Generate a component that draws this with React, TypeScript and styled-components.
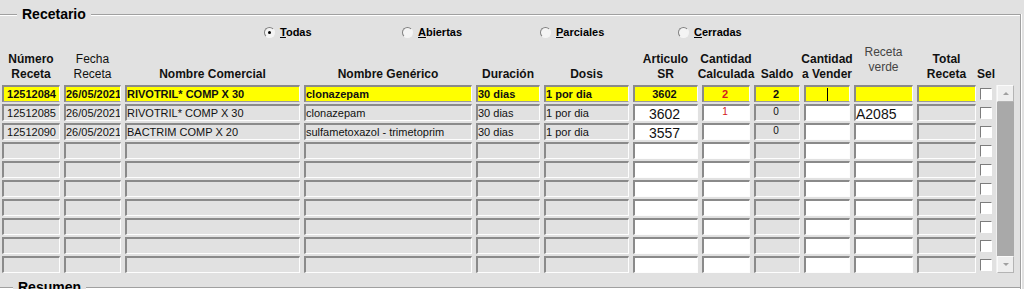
import styled, { createGlobalStyle, css } from 'styled-components';

const GlobalStyle = createGlobalStyle`
    html, body {
        margin: 0;
        padding: 0;
        background: #e1e1e1;
        overflow: hidden;
        height: 289px;
    }
    body {
        font-family: 'Liberation Sans', Arial, sans-serif;
        color: #000;
    }
`;

const COLS = [58, 57, 175, 168, 64, 85, 65, 48, 46, 46, 59, 59, 12, 18];

type Tone = 'gray' | 'white' | 'yellow';
type Align = 'left' | 'center' | 'right';

interface CellData {
    text?: string;
    align?: Align;
    big?: boolean;
    small?: boolean;
    red?: boolean;
    caret?: boolean;
}

interface Row {
    active?: boolean;
    cells: CellData[];
}

// which columns are editable (white background)
const WHITE_COLS = [6, 7, 9, 10];

const HEADERS: { lines: string[]; light?: boolean; raised?: boolean }[] = [
    { lines: ['Número', 'Receta'] },
    { lines: ['Fecha', 'Receta'], light: true },
    { lines: ['Nombre Comercial'] },
    { lines: ['Nombre Genérico'] },
    { lines: ['Duración'] },
    { lines: ['Dosis'] },
    { lines: ['Articulo', 'SR'] },
    { lines: ['Cantidad', 'Calculada'] },
    { lines: ['Saldo'] },
    { lines: ['Cantidad', 'a Vender'] },
    { lines: ['Receta', 'verde'], light: true, raised: true },
    { lines: ['Total', 'Receta'] },
    { lines: ['Sel'] },
];

const ROWS: Row[] = [
    {
        active: true,
        cells: [
            { text: '12512084', align: 'right' },
            { text: '26/05/2021' },
            { text: 'RIVOTRIL* COMP X 30' },
            { text: 'clonazepam' },
            { text: '30 dias' },
            { text: '1 por dia' },
            { text: '3602', align: 'center' },
            { text: '2', align: 'center', red: true },
            { text: '2', align: 'center' },
            { caret: true },
            {},
            {},
        ],
    },
    {
        cells: [
            { text: '12512085', align: 'right' },
            { text: '26/05/2021' },
            { text: 'RIVOTRIL* COMP X 30' },
            { text: 'clonazepam' },
            { text: '30 dias' },
            { text: '1 por dia' },
            { text: '3602', align: 'center', big: true },
            { text: '1', align: 'center', red: true, small: true },
            { text: '0', align: 'center', small: true },
            {},
            { text: 'A2085', big: true },
            {},
        ],
    },
    {
        cells: [
            { text: '12512090', align: 'right' },
            { text: '26/05/2021' },
            { text: 'BACTRIM COMP X 20' },
            { text: 'sulfametoxazol - trimetoprim' },
            { text: '30 dias' },
            { text: '1 por dia' },
            { text: '3557', align: 'center', big: true },
            {},
            { text: '0', align: 'center', small: true },
            {},
            {},
            {},
        ],
    },
];

while (ROWS.length < 10) ROWS.push({ cells: Array.from({ length: 12 }, () => ({})) });

const Frame = styled.fieldset`
    margin: 6px 3px 0 -6px;
    padding: 2px 0 0 7px;
    border: 1px solid #a0a0a0;
    border-bottom: none;
    box-shadow: inset 1px 1px 0 #fff, 1px 0 0 #fff;
    min-width: 0;
    height: 320px;
`;

const Legend = styled.legend`
    margin-left: 15px;
    padding: 0 5px;
    font-size: 14px;
    font-weight: bold;
    line-height: 16px;
    background: #e1e1e1;
`;

const SubFrame = styled.fieldset`
    margin: 6px 0 0 -4px;
    padding: 0;
    border: none;
    border-top: 1px solid #a0a0a0;
    box-shadow: inset 0 1px 0 #fff;
    height: 30px;
`;

const RadioRow = styled.div`
    display: flex;
    padding-left: 262px;
    height: 16px;
    align-items: center;
`;

const RadioItem = styled.label`
    width: 138px;
    display: flex;
    align-items: center;
    gap: 5px;
    font-size: 11px;
    font-weight: bold;
`;

const RadioDot = styled.span<{ $on?: boolean }>`
    width: 9px;
    height: 9px;
    border-radius: 50%;
    border: 1px solid;
    border-color: #808080 #f4f4f4 #f4f4f4 #808080;
    background: #f4f4f4;
    display: flex;
    align-items: center;
    justify-content: center;
    &::after {
        content: '';
        width: 3px;
        height: 3px;
        border-radius: 50%;
        background: ${(p) => (p.$on ? '#000' : 'transparent')};
    }
`;

const Grid = styled.div`
    display: grid;
    grid-template-columns: ${COLS.map((c) => `${c}px`).join(' ')};
    grid-template-rows: 33px repeat(10, 17px);
    column-gap: 4px;
    row-gap: 2px;
    margin-top: 10px;
`;

const HeadCell = styled.div<{ $light?: boolean; $raised?: boolean }>`
    display: flex;
    flex-direction: column;
    justify-content: flex-end;
    align-items: center;
    font-size: 12px;
    line-height: 15px;
    font-weight: ${(p) => (p.$light ? 'normal' : 'bold')};
    color: ${(p) => (p.$raised ? '#444' : '#111')};
    padding-bottom: ${(p) => (p.$raised ? '8px' : '1px')};
    white-space: nowrap;
`;

const toneBg = { gray: '#e1e1e1', white: '#ffffff', yellow: '#ffff00' };

const Cell = styled.div<{ $tone: Tone; $align: Align; $bold?: boolean }>`
    box-sizing: border-box;
    display: flex;
    align-items: center;
    justify-content: ${(p) =>
        p.$align === 'right' ? 'flex-end' : p.$align === 'center' ? 'center' : 'flex-start'};
    padding: 0 3px 0 0;
    background: ${(p) => toneBg[p.$tone]};
    border-style: solid;
    border-width: 2px 1px 1px 2px;
    border-color: #8a8a8a #fdfdfd #fdfdfd #8a8a8a;
    font-size: 11px;
    font-weight: ${(p) => (p.$bold ? 'bold' : 'normal')};
    white-space: nowrap;
    overflow: hidden;
    ${(p) =>
        p.$tone === 'yellow' &&
        css`
            border-bottom-color: #9a9a9a;
        `}
`;

const Value = styled.span<{ $big?: boolean; $small?: boolean; $red?: boolean }>`
    color: ${(p) => (p.$red ? '#d42020' : '#111')};
    font-size: ${(p) => (p.$big ? '14px' : p.$small ? '10px' : '11px')};
    line-height: 1;
    ${(p) =>
        p.$big &&
        css`
            margin-top: 1px;
        `}
    ${(p) =>
        p.$small &&
        css`
            margin-top: -3px;
        `}
`;

const Caret = styled.span`
    width: 1px;
    height: 13px;
    background: #000;
    margin-left: 21px;
`;

const CheckCell = styled.div`
    display: flex;
    align-items: center;
    justify-content: center;
`;

const Check = styled.span`
    box-sizing: border-box;
    width: 12px;
    height: 12px;
    background: #fff;
    border-style: solid;
    border-width: 1px;
    border-color: #7c7c7c #fff #fff #7c7c7c;
`;

const ScrollBar = styled.div`
    grid-column: 14;
    grid-row: 2 / span 10;
    display: flex;
    flex-direction: column;
    border-left: 1px solid #f0f0f0;
`;

const ScrollBtn = styled.div<{ $down?: boolean }>`
    height: 17px;
    background: #eeeeee;
    border: 1px solid;
    border-color: #fafafa #b4b4b4 #b4b4b4 #fafafa;
    box-sizing: border-box;
    display: flex;
    align-items: center;
    justify-content: center;
    &::after {
        content: '';
        border-left: 3px solid transparent;
        border-right: 3px solid transparent;
        ${(p) =>
            p.$down
                ? css`
                      border-top: 3px solid #a0a0a0;
                  `
                : css`
                      border-bottom: 3px solid #a0a0a0;
                  `}
    }
`;

const ScrollTrack = styled.div`
    flex: 1;
    background: #a9a9a9;
`;

function toneFor(row: Row, col: number): Tone {
    if (row.active) return 'yellow';
    return WHITE_COLS.includes(col) ? 'white' : 'gray';
}

function App() {
    const radios = [
        { key: 'T', rest: 'odas', on: true },
        { key: 'A', rest: 'biertas' },
        { key: 'P', rest: 'arciales' },
        { key: 'C', rest: 'erradas' },
    ];

    return (
        <>
            <GlobalStyle />
            <Frame>
                <Legend>Recetario</Legend>
                <RadioRow>
                    {radios.map((r) => (
                        <RadioItem key={r.key}>
                            <RadioDot $on={r.on} />
                            <span>
                                <u>{r.key}</u>
                                {r.rest}
                            </span>
                        </RadioItem>
                    ))}
                </RadioRow>

                <Grid>
                    {HEADERS.map((h, i) => (
                        <HeadCell key={i} $light={h.light} $raised={h.raised}>
                            {h.lines.map((l) => (
                                <span key={l}>{l}</span>
                            ))}
                        </HeadCell>
                    ))}
                    <div />

                    {ROWS.map((row, ri) => [
                        ...row.cells.map((c, ci) => (
                            <Cell
                                key={`${ri}-${ci}`}
                                $tone={toneFor(row, ci)}
                                $align={c.align ?? 'left'}
                                $bold={row.active}>
                                {c.text && (
                                    <Value $big={c.big} $small={c.small} $red={c.red}>
                                        {c.text}
                                    </Value>
                                )}
                                {c.caret && <Caret />}
                            </Cell>
                        )),
                        <CheckCell key={`${ri}-sel`}>
                            <Check />
                        </CheckCell>,
                    ])}

                    <ScrollBar>
                        <ScrollBtn />
                        <ScrollTrack />
                        <ScrollBtn $down />
                    </ScrollBar>
                </Grid>

                <SubFrame>
                    <Legend>Resumen</Legend>
                </SubFrame>
            </Frame>
        </>
    );
}

export default App;
